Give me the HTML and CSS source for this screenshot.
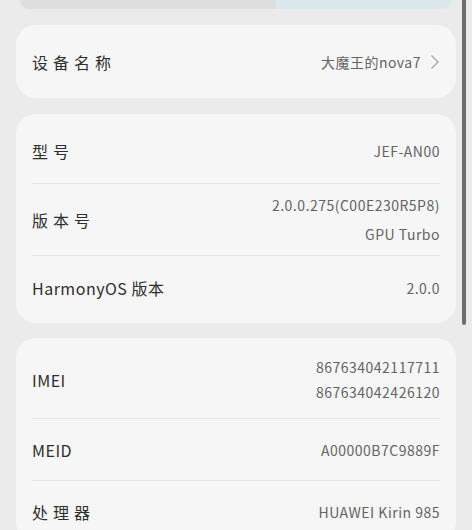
FILE: index.html
```html
<!DOCTYPE html>
<html lang="zh">
<head>
<meta charset="utf-8">
<link rel="stylesheet" href="styles.css">
</head>
<body>
<div class="page">
  <div class="top-card"><div class="top-left"></div><div class="top-right"></div></div>

  <div class="card card-name">
    <div class="row">
      <span class="label">设备名称</span>
      <span class="value link">大魔王的nova7
        <svg class="chev" width="10" height="16" viewBox="0 0 10 16"><polyline points="1.5,1.5 8,8 1.5,14.5" fill="none" stroke="#a8a8a8" stroke-width="1.4"/></svg>
      </span>
    </div>
  </div>

  <div class="card card-info">
    <div class="row r-model">
      <span class="label">型号</span>
      <span class="value">JEF-AN00</span>
    </div>
    <div class="row r-build">
      <span class="label">版本号</span>
      <span class="value multi"><span>2.0.0.275(C00E230R5P8)</span><span>GPU Turbo</span></span>
    </div>
    <div class="row r-os">
      <span class="label latin">HarmonyOS 版本</span>
      <span class="value">2.0.0</span>
    </div>
  </div>

  <div class="card card-hw">
    <div class="row r-imei">
      <span class="label latin">IMEI</span>
      <span class="value multi tight"><span>867634042117711</span><span>867634042426120</span></span>
    </div>
    <div class="row r-meid">
      <span class="label latin">MEID</span>
      <span class="value">A00000B7C9889F</span>
    </div>
    <div class="row r-cpu">
      <span class="label">处理器</span>
      <span class="value">HUAWEI Kirin 985</span>
    </div>
  </div>
</div>
<div class="scrollbar"></div>
</body>
</html>
```
FILE: styles.css
```css
html, body {
  margin: 0;
  padding: 0;
  background: #ebebeb;
  height: 530px;
  overflow: hidden;
}
body {
  font-family: "Noto Sans CJK SC", "Noto Sans", sans-serif;
  color: #2e2e2e;
}
.page {
  padding: 0 16px;
  display: flex;
  flex-direction: column;
}
.top-card {
  height: 9px;
  margin: 0 4px;
  border-radius: 0 0 14px 14px;
  overflow: hidden;
  display: flex;
}
.top-left {
  width: 256px;
  background: #dcdedf;
}
.top-right {
  flex: 1;
  background: #dde8ed;
}
.card {
  background: #f6f6f6;
  border-radius: 20px;
  padding: 0 16px;
  margin-top: 16px;
}
.card-name { margin-top: 16px; }
.card-info { margin-top: 16px; padding-top: 4px; padding-bottom: 4px; }
.card-hw { margin-top: 15px; padding-top: 4px; }
.row {
  display: flex;
  justify-content: space-between;
  align-items: center;
  border-top: 1px solid #e3e3e3;
  box-sizing: border-box;
}
.row:first-child { border-top: none; }
.card-name .row { height: 73px; }
.r-model { height: 65px; }
.r-build { height: 72px; }
.r-os { height: 64px; }
.r-imei { height: 76px; }
.r-meid { height: 62px; }
.r-cpu { height: 62px; }
.label {
  font-size: 16px;
  letter-spacing: 5px;
  font-weight: 400;
}
.label.latin { letter-spacing: 0.5px; }
.value {
  font-size: 14px;
  letter-spacing: 0.5px;
  color: #646464;
  text-align: right;
}
.value.link {
  display: flex;
  align-items: center;
  gap: 9px;
}
.chev { display: block; }
.multi {
  display: flex;
  flex-direction: column;
  align-items: flex-end;
  line-height: 29px;
}
.multi.tight { line-height: 25px; }
.scrollbar {
  position: absolute;
  top: 0;
  left: 462px;
  width: 4px;
  height: 325px;
  background: #6f6f6f;
  border-radius: 0 0 2px 2px;
}
```
